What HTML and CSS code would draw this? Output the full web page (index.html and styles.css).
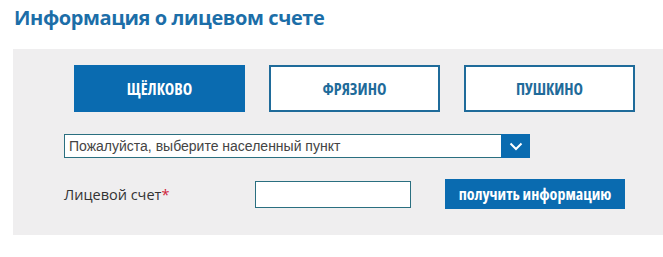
FILE: index.html
```html
<!DOCTYPE html>
<html lang="ru">
<head>
    <meta charset="UTF-8">
    <meta name="viewport" content="width=device-width, initial-scale=1.0">
    <title>Информация о лицевом счете</title>
    <link rel="stylesheet" href="styles.css">
</head>
<body>
    <h1 class="title">Информация о лицевом счете</h1>
    <div class="panel">
        <div class="tabs">
            <button class="tab active">ЩЁЛКОВО</button>
            <button class="tab">ФРЯЗИНО</button>
            <button class="tab">ПУШКИНО</button>
        </div>
        <div class="select">
            <span class="select-text">Пожалуйста, выберите населенный пункт</span>
            <span class="select-arrow">
                <svg width="14" height="9" viewBox="0 0 14 9"><path d="M1.5 1.5 L7 7 L12.5 1.5" fill="none" stroke="#fff" stroke-width="2"/></svg>
            </span>
        </div>
        <div class="row">
            <label class="label">Лицевой счет<span class="req">*</span></label>
            <input class="field" type="text">
            <button class="submit">получить информацию</button>
        </div>
    </div>
</body>
</html>
```

FILE: styles.css
```css
body {
    font-family: "Open Sans", Arial, sans-serif;
    margin: 0;
    padding: 0;
    background: #fff;
}
.title {
    font-family: "Open Sans", sans-serif;
    font-weight: bold;
    font-size: 20px;
    letter-spacing: -0.4px;
    line-height: 26px;
    color: #1c6ea8;
    margin: 0;
    padding: 5px 0 0 14px;
    height: 49px;
    box-sizing: border-box;
}
.panel {
    margin-left: 13px;
    height: 186px;
    background: #efeeef;
    padding: 16px 0 0 51px;
    box-sizing: border-box;
}
.tabs {
    display: flex;
    gap: 24px;
    margin-left: 10px;
}
.tab {
    width: 171px;
    height: 47px;
    background: #fff;
    border: 2px solid #1f6b9a;
    color: #1f6b9a;
    font-family: "Open Sans", sans-serif;
    font-stretch: 75%;
    font-weight: bold;
    font-size: 16px;
    padding: 0;
    cursor: pointer;
}
.tab.active {
    background: #0a6bb0;
    border-color: #0a6bb0;
    color: #fff;
}
.select {
    display: flex;
    width: 466px;
    height: 24px;
    margin-top: 22px;
    background: #fff;
    border: 1px solid #2a6f80;
    box-sizing: border-box;
}
.select-text {
    flex: 1;
    font-family: "Liberation Sans", Arial, sans-serif;
    font-size: 14px;
    color: #444;
    line-height: 22px;
    padding-left: 4px;
}
.select-arrow {
    width: 29px;
    margin: -1px -1px -1px 0;
    background: #0a6bb0;
    display: flex;
    align-items: center;
    justify-content: center;
}
.row {
    display: flex;
    align-items: center;
    margin-top: 21px;
}
.label {
    width: 191px;
    font-family: "Open Sans", sans-serif;
    font-size: 14.5px;
    color: #333;
}
.req {
    color: #d0243b;
}
.field {
    width: 156px;
    height: 27px;
    box-sizing: border-box;
    border: 1px solid #2a6f80;
    margin: 0;
}
.submit {
    margin-left: 34px;
    width: 180px;
    height: 30px;
    background: #0a6bb0;
    color: #fff;
    border: none;
    font-family: "Open Sans", sans-serif;
    font-stretch: 75%;
    font-weight: bold;
    font-size: 16px;
    padding: 0;
    cursor: pointer;
}
```
